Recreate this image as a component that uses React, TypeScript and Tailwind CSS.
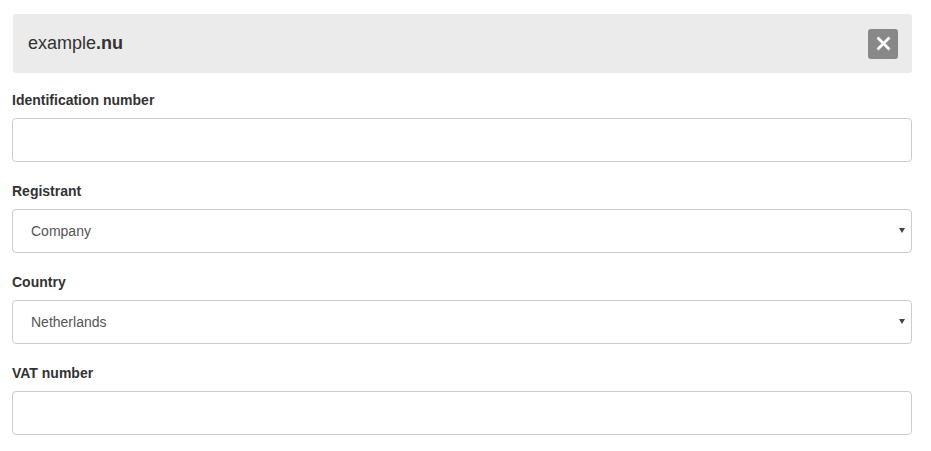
import { useState } from "react";

type Field = {
  label: string;
  kind: "input" | "select";
  options?: string[];
};

const fields: Field[] = [
  { label: "Identification number", kind: "input" },
  { label: "Registrant", kind: "select", options: ["Company", "Private person"] },
  { label: "Country", kind: "select", options: ["Netherlands", "Belgium", "Germany"] },
  { label: "VAT number", kind: "input" },
];

export default function App() {
  const [open, setOpen] = useState(true);

  return (
    <main
      className="bg-white min-h-screen pt-[14px] pl-3 text-[#333]"
      style={{ fontFamily: '"Liberation Sans", Arial, sans-serif' }}
    >
      <div className="w-[900px]">
        {open && (
          <div className="ml-px h-[59px] bg-[#ebebeb] rounded-[3px] flex items-center justify-between pl-[15px] pr-[14px] mb-[17px]">
            <div className="text-[18px] text-[#333]">
              example<span className="font-bold">.nu</span>
            </div>
            <button
              type="button"
              onClick={() => setOpen(false)}
              className="w-[30px] h-[30px] bg-[#888] rounded-[3px] flex items-center justify-center"
            >
              <svg width="15" height="15" viewBox="0 0 15 15">
                <path
                  d="M1.5 1.5 L13.5 13.5 M13.5 1.5 L1.5 13.5"
                  stroke="white"
                  strokeWidth="2.8"
                />
              </svg>
            </button>
          </div>
        )}
        {fields.map((f) => (
          <div key={f.label} className="mb-[19px]">
            <label className="block text-[14px] leading-[20px] font-bold mb-[8px]">
              {f.label}
            </label>
            {f.kind === "input" ? (
              <input
                type="text"
                className="block w-full h-[44px] border border-[#ccc] rounded-[4px] px-3 text-[14px] text-[#555] outline-none"
              />
            ) : (
              <div className="relative">
                <select className="block w-full h-[44px] border border-[#ccc] rounded-[4px] pl-[18px] text-[14px] text-[#555] bg-white appearance-none outline-none">
                  {f.options!.map((o) => (
                    <option key={o}>{o}</option>
                  ))}
                </select>
                <svg
                  className="absolute right-[7px] top-[19px] pointer-events-none"
                  width="6"
                  height="5"
                  viewBox="0 0 6 5"
                >
                  <path d="M0 0 H6 L3 5 Z" fill="#444" />
                </svg>
              </div>
            )}
          </div>
        ))}
      </div>
    </main>
  );
}
